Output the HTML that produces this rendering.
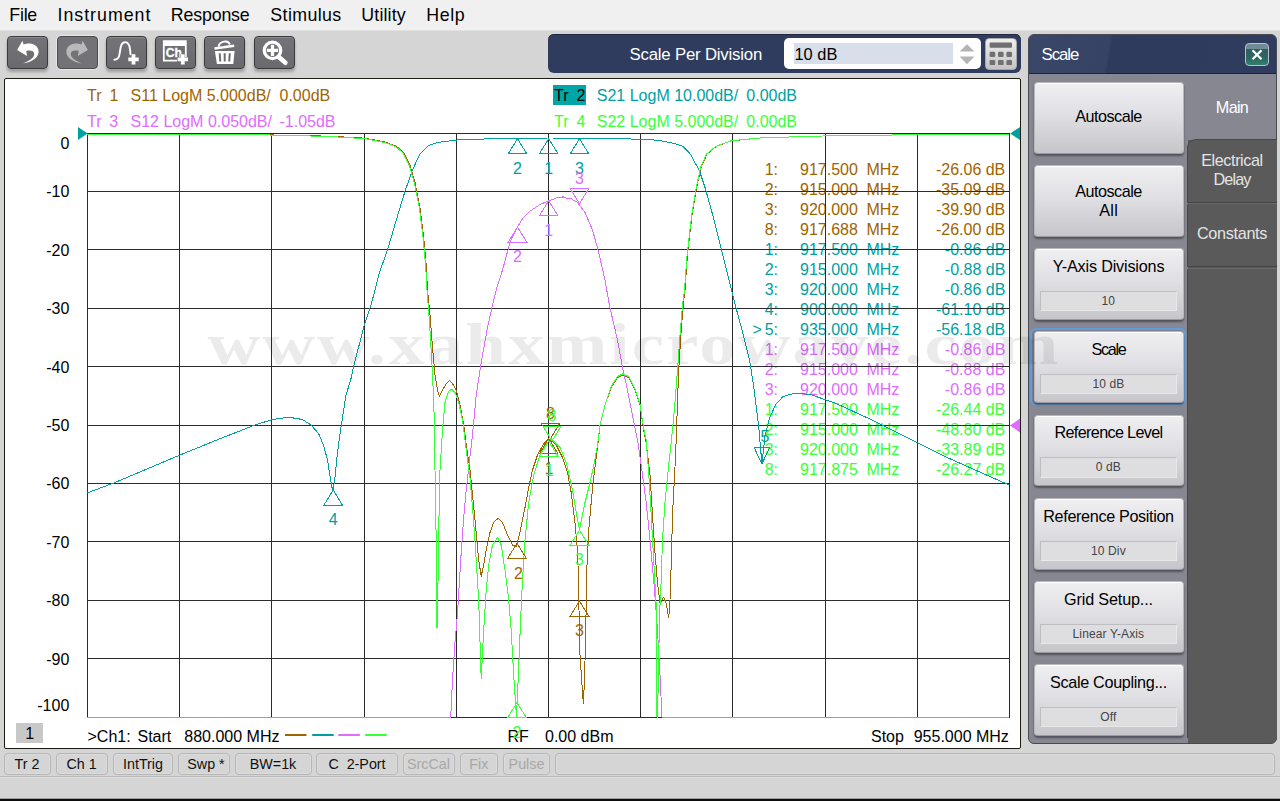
<!DOCTYPE html><html><head><meta charset="utf-8"><title>Network Analyzer</title><style>
*{box-sizing:border-box;margin:0;padding:0}
html,body{width:1280px;height:801px;overflow:hidden;background:#d5d5d5;font-family:"Liberation Sans",sans-serif;}
.abs{position:absolute}
#menubar{position:absolute;left:0;top:0;width:1280px;height:30px;background:#f0f0f0;}
#menubar span{position:absolute;top:4.3px;font-size:17.8px;line-height:22px;color:#000;white-space:nowrap}
#toolbar{position:absolute;left:0;top:30px;width:1280px;height:48px;background:#d5d5d5;border-top:1px solid #e2e2e2}
.tb{position:absolute;top:36px;width:41px;height:33px;border-radius:4px;background:linear-gradient(#747478,#6a6a6e);border:1px solid #3a3a3c;box-shadow:0 3px 3px rgba(0,0,0,.26), inset 0 1px 0 rgba(255,255,255,.16)}
.tb svg{position:absolute;left:-1px;top:-1px}
#spd{position:absolute;left:548px;top:34px;width:473px;height:39px;border-radius:6px;background:#2f3c5e;box-shadow:0 1px 0 #1f2840 inset}
#spd .lbl{position:absolute;left:81.5px;top:10.7px;font-size:16.8px;letter-spacing:-0.2px;line-height:20px;color:#fff;white-space:nowrap}
#spd .inp{position:absolute;left:236px;top:4px;width:197px;height:31px;border-radius:5px;background:#fff}
#spd .hl{position:absolute;left:246px;top:9px;width:159px;height:21px;background:#d8deea}
#spd .val{position:absolute;left:246.5px;top:9.6px;font-size:16.4px;line-height:21px;color:#000}
#spd .calc{position:absolute;left:437px;top:4px;width:32px;height:32px;border-radius:4px;background:linear-gradient(#efefef,#c4c4c4);border:1px solid #a8a8a8}
#chart{position:absolute;left:4px;top:78px;width:1017px;height:671px;background:#fff;border:1px solid #1c1c14;border-radius:2px}
#panel{position:absolute;left:1028px;top:34px;width:249px;height:710px;border-radius:6px;background:#5a5a5a;overflow:hidden;border:1px solid #4a4a52}
#panel .title{position:absolute;left:0;top:0;width:249px;height:39px;background:linear-gradient(100deg,#3a4768 0%,#364364 32%,#2e3b5d 33%,#2f3c5e 100%);border-bottom:1px solid #1c243a}
#panel .title span{position:absolute;left:12.6px;top:9.8px;font-size:16.8px;line-height:20px;color:#fff;letter-spacing:-1.05px}
#panel .col{position:absolute;left:0;top:39px;width:159px;height:671px;background:#878791}
#panel .maintab{position:absolute;left:159px;top:39px;width:90px;height:66px;background:#878791}
.pbtn{position:absolute;left:1033.5px;width:150px;height:71.5px;border-radius:4px;background:linear-gradient(#efeff2 0%,#e0e0e4 45%,#c6c6ca 100%);box-shadow:0 2px 2px rgba(40,40,50,.55), inset 0 1px 0 #fff;border:1px solid #b8b8bc;border-bottom-color:#9a9aa0;color:#000;text-align:center;font-size:16.2px;white-space:nowrap}
.pbtn .t{position:absolute;left:0;width:148px;text-align:center;line-height:19px}
.pbtn .v{position:absolute;left:5.7px;top:41.6px;width:136.4px;height:20.4px;background:#dedee0;border:1px solid #bdbdc2;border-bottom-color:#e8e8ea;border-right-color:#e8e8ea;font-size:12px;line-height:18px;color:#444;text-align:center;letter-spacing:.12px}
.tabtxt{position:absolute;color:#e4e4e4;font-size:16.2px;line-height:19px;text-align:center;white-space:nowrap}
#status{position:absolute;left:0;top:750px;width:1280px;height:27px;background:#d5d5d5}
.cell{position:absolute;top:753px;height:22px;border:1px solid #b6b6b6;border-radius:4px;box-shadow:inset 0 0 0 1px #dcdcdc;font-size:14.3px;line-height:20.6px;text-align:center;color:#111;white-space:nowrap}
.cell.dis{color:#a8a8a8}
#bottom{position:absolute;left:0;top:776px;width:1280px;height:23px;background:#d5d5d5;border-top:1px solid #b9b9b9;border-bottom:1px solid #9c9c9c;box-shadow:inset 0 1px 0 #dedede}
#bline{position:absolute;left:0;top:799.4px;width:1280px;height:1.6px;background:#0c0c0c}
</style></head><body>
<div id="menubar">
<span style="left:9.3px;letter-spacing:-0.23px">File</span>
<span style="left:57.5px;letter-spacing:0.99px">Instrument</span>
<span style="left:170.8px;letter-spacing:-0.16px">Response</span>
<span style="left:270.3px;letter-spacing:0.39px">Stimulus</span>
<span style="left:361.3px;letter-spacing:0.16px">Utility</span>
<span style="left:426.3px;letter-spacing:0.63px">Help</span>
</div>
<div id="toolbar"></div>
<div class="tb" style="left:7px"><svg width="41" height="33" viewBox="0 0 41 33"><path d="M10.1 14.1 L15.5 4.7 L16.6 8.4 C23 6.2 31.4 8.6 31.6 15.4 C31.8 21.6 24.6 26 16.2 27.4 C21.6 25.2 27 22 27.2 18.2 C27.4 14.8 23.4 14 19.2 15 L20.1 19.9 Z" fill="#fff"/></svg></div>
<div class="tb" style="left:57px;box-shadow:0 0 0 1px #e6e6e6;border-color:#4c4c4e;background:#737377"><svg width="41" height="33" viewBox="0 0 41 33"><path transform="translate(41,0) scale(-1,1)" d="M10.1 14.1 L15.5 4.7 L16.6 8.4 C23 6.2 31.4 8.6 31.6 15.4 C31.8 21.6 24.6 26 16.2 27.4 C21.6 25.2 27 22 27.2 18.2 C27.4 14.8 23.4 14 19.2 15 L20.1 19.9 Z" fill="#b9b9bb"/></svg></div>
<div class="tb" style="left:106px"><svg width="41" height="33" viewBox="0 0 41 33"><path d="M8.4 23.7 C12.4 23.7 13.2 21 13.8 16.6 C14.6 10.6 15.2 6.3 19.3 6.3 C23.4 6.3 23.6 10.6 24.1 14 C24.3 15.6 24.4 17 24.5 18.2" fill="none" stroke="#fff" stroke-width="1.9" stroke-linecap="round"/><path d="M22.3 21.5 H25.6 V18.2 H29.4 V21.5 H32.7 V25.299999999999997 H29.4 V28.599999999999998 H25.6 V25.299999999999997 H22.3Z" fill="#fff" /></svg></div>
<div class="tb" style="left:155px"><svg width="41" height="33" viewBox="0 0 41 33"><path d="M7.9 4.2 H31.7 V21 H29.9 V9.9 H9.7 V23.7 H22 V25.5 H7.9Z" fill="#fff"/><text x="10.8" y="20.9" font-family="Liberation Sans, sans-serif" font-weight="bold" font-size="12.8" fill="#fff" stroke="#fff" stroke-width=".35" textLength="16.2" lengthAdjust="spacingAndGlyphs">Ch</text><path d="M22.6 21.5 H25.900000000000002 V18.2 H29.7 V21.5 H33.0 V25.299999999999997 H29.7 V28.599999999999998 H25.900000000000002 V25.299999999999997 H22.6Z" fill="#fff" stroke="#6e6e72" stroke-width=".9" paint-order="stroke"/></svg></div>
<div class="tb" style="left:204px"><svg width="41" height="33" viewBox="0 0 41 33"><path d="M10.9 15 H30.6 L29.3 27.9 H12.9 Z" fill="#fff"/><path d="M15.7 17.3 L16.3 25.5 M20.7 17.3 V25.5 M25.8 17.3 L25.2 25.5" stroke="#6e6e72" stroke-width="2" fill="none"/><path d="M10.5 12.5 L30.2 9.8" stroke="#fff" stroke-width="2.6" fill="none"/><path d="M14.6 10.6 C15.4 5 24.4 3.6 25.8 8.6" stroke="#fff" stroke-width="2" fill="none"/></svg></div>
<div class="tb" style="left:253.5px"><svg width="41" height="33" viewBox="0 0 41 33"><circle cx="18.5" cy="14.4" r="8.2" fill="none" stroke="#fff" stroke-width="3.3"/><path d="M12.9 14.4 H24.1 M18.5 8.8 V20" stroke="#fff" stroke-width="3.3"/><path d="M24.8 21 L31.4 26.8" stroke="#fff" stroke-width="4.6" stroke-linecap="round"/></svg></div>
<div id="spd"><span class="lbl">Scale Per Division</span><div class="inp"></div><div class="hl"></div><span class="val">10 dB</span><svg class="abs" style="left:410px;top:8px" width="18" height="24" viewBox="0 0 18 24"><path d="M9 2.2 L16.4 9.4 H1.6Z M9 22.2 L16.4 14.4 H1.6Z" fill="#b4b4b4"/></svg><div class="calc"><svg width="30" height="30" viewBox="0 0 30 30" style="position:absolute;left:0;top:0"><g fill="#707070"><rect x="3.6" y="3.6" width="22.4" height="5.2" rx="1"/><rect x="3.6" y="12.8" width="5.6" height="5.2" rx="1.2"/><rect x="12.0" y="12.8" width="5.6" height="5.2" rx="1.2"/><rect x="20.4" y="12.8" width="5.6" height="5.2" rx="1.2"/><rect x="3.6" y="20.9" width="5.6" height="5.2" rx="1.2"/><rect x="12.0" y="20.9" width="5.6" height="5.2" rx="1.2"/><rect x="20.4" y="20.9" width="5.6" height="5.2" rx="1.2"/></g></svg></div></div>
<div id="chart"></div>
<svg class="abs" style="left:0;top:0" width="1280" height="801" viewBox="0 0 1280 801" font-family="Liberation Sans, sans-serif" font-size="16">
<text x="87" y="100.7" fill="#9E6400" text-anchor="start" >Tr</text><text x="109.4" y="100.7" fill="#9E6400" text-anchor="start" >1</text><text x="130.5" y="100.7" fill="#9E6400" text-anchor="start" >S11 LogM 5.000dB/</text><text x="279.5" y="100.7" fill="#9E6400" text-anchor="start" >0.00dB</text>
<text x="87" y="126.7" fill="#DE6CFF" text-anchor="start" >Tr</text><text x="109.2" y="126.7" fill="#DE6CFF" text-anchor="start" >3</text><text x="130.5" y="126.7" fill="#DE6CFF" text-anchor="start" >S12 LogM 0.050dB/</text><text x="279.5" y="126.7" fill="#DE6CFF" text-anchor="start" >-1.05dB</text>
<rect x="553" y="85" width="33" height="20" fill="#00A6A6"/>
<text x="554" y="100.7" fill="#000" text-anchor="start" >Tr</text><text x="576.4" y="100.7" fill="#000" text-anchor="start" >2</text><text x="596.8" y="100.7" fill="#00A0A0" text-anchor="start" >S21 LogM 10.00dB/</text><text x="746.3" y="100.7" fill="#00A0A0" text-anchor="start" >0.00dB</text>
<text x="554" y="126.7" fill="#38FF38" text-anchor="start" >Tr</text><text x="576.4" y="126.7" fill="#38FF38" text-anchor="start" >4</text><text x="596.8" y="126.7" fill="#38FF38" text-anchor="start" >S22 LogM 5.000dB/</text><text x="746.3" y="126.7" fill="#38FF38" text-anchor="start" >0.00dB</text>
<text x="69.3" y="149.0" fill="#000" text-anchor="end" >0</text>
<text x="69.3" y="197.4" fill="#000" text-anchor="end" >-10</text>
<text x="69.3" y="255.8" fill="#000" text-anchor="end" >-20</text>
<text x="69.3" y="314.2" fill="#000" text-anchor="end" >-30</text>
<text x="69.3" y="372.6" fill="#000" text-anchor="end" >-40</text>
<text x="69.3" y="431.0" fill="#000" text-anchor="end" >-50</text>
<text x="69.3" y="489.4" fill="#000" text-anchor="end" >-60</text>
<text x="69.3" y="547.8" fill="#000" text-anchor="end" >-70</text>
<text x="69.3" y="606.2" fill="#000" text-anchor="end" >-80</text>
<text x="69.3" y="664.6" fill="#000" text-anchor="end" >-90</text>
<text x="69.3" y="710.8" fill="#000" text-anchor="end" >-100</text>
<text x="778" y="174.8" fill="#9E6400" text-anchor="end" >1:</text><text x="800" y="174.8" fill="#9E6400" text-anchor="start" >917.500</text><text x="866.4" y="174.8" fill="#9E6400" text-anchor="start" >MHz</text><text x="1005.3" y="174.8" fill="#9E6400" text-anchor="end" >-26.06 dB</text>
<text x="778" y="194.8" fill="#9E6400" text-anchor="end" >2:</text><text x="800" y="194.8" fill="#9E6400" text-anchor="start" >915.000</text><text x="866.4" y="194.8" fill="#9E6400" text-anchor="start" >MHz</text><text x="1005.3" y="194.8" fill="#9E6400" text-anchor="end" >-35.09 dB</text>
<text x="778" y="214.8" fill="#9E6400" text-anchor="end" >3:</text><text x="800" y="214.8" fill="#9E6400" text-anchor="start" >920.000</text><text x="866.4" y="214.8" fill="#9E6400" text-anchor="start" >MHz</text><text x="1005.3" y="214.8" fill="#9E6400" text-anchor="end" >-39.90 dB</text>
<text x="778" y="234.8" fill="#9E6400" text-anchor="end" >8:</text><text x="800" y="234.8" fill="#9E6400" text-anchor="start" >917.688</text><text x="866.4" y="234.8" fill="#9E6400" text-anchor="start" >MHz</text><text x="1005.3" y="234.8" fill="#9E6400" text-anchor="end" >-26.00 dB</text>
<text x="778" y="254.8" fill="#00A0A0" text-anchor="end" >1:</text><text x="800" y="254.8" fill="#00A0A0" text-anchor="start" >917.500</text><text x="866.4" y="254.8" fill="#00A0A0" text-anchor="start" >MHz</text><text x="1005.3" y="254.8" fill="#00A0A0" text-anchor="end" >-0.86 dB</text>
<text x="778" y="274.8" fill="#00A0A0" text-anchor="end" >2:</text><text x="800" y="274.8" fill="#00A0A0" text-anchor="start" >915.000</text><text x="866.4" y="274.8" fill="#00A0A0" text-anchor="start" >MHz</text><text x="1005.3" y="274.8" fill="#00A0A0" text-anchor="end" >-0.88 dB</text>
<text x="778" y="294.8" fill="#00A0A0" text-anchor="end" >3:</text><text x="800" y="294.8" fill="#00A0A0" text-anchor="start" >920.000</text><text x="866.4" y="294.8" fill="#00A0A0" text-anchor="start" >MHz</text><text x="1005.3" y="294.8" fill="#00A0A0" text-anchor="end" >-0.86 dB</text>
<text x="778" y="314.8" fill="#00A0A0" text-anchor="end" >4:</text><text x="800" y="314.8" fill="#00A0A0" text-anchor="start" >900.000</text><text x="866.4" y="314.8" fill="#00A0A0" text-anchor="start" >MHz</text><text x="1005.3" y="314.8" fill="#00A0A0" text-anchor="end" >-61.10 dB</text>
<text x="752.5" y="334.8" fill="#00A0A0" text-anchor="start" >&gt;</text>
<text x="778" y="334.8" fill="#00A0A0" text-anchor="end" >5:</text><text x="800" y="334.8" fill="#00A0A0" text-anchor="start" >935.000</text><text x="866.4" y="334.8" fill="#00A0A0" text-anchor="start" >MHz</text><text x="1005.3" y="334.8" fill="#00A0A0" text-anchor="end" >-56.18 dB</text>
<text x="778" y="354.8" fill="#DE6CFF" text-anchor="end" >1:</text><text x="800" y="354.8" fill="#DE6CFF" text-anchor="start" >917.500</text><text x="866.4" y="354.8" fill="#DE6CFF" text-anchor="start" >MHz</text><text x="1005.3" y="354.8" fill="#DE6CFF" text-anchor="end" >-0.86 dB</text>
<text x="778" y="374.8" fill="#DE6CFF" text-anchor="end" >2:</text><text x="800" y="374.8" fill="#DE6CFF" text-anchor="start" >915.000</text><text x="866.4" y="374.8" fill="#DE6CFF" text-anchor="start" >MHz</text><text x="1005.3" y="374.8" fill="#DE6CFF" text-anchor="end" >-0.88 dB</text>
<text x="778" y="394.8" fill="#DE6CFF" text-anchor="end" >3:</text><text x="800" y="394.8" fill="#DE6CFF" text-anchor="start" >920.000</text><text x="866.4" y="394.8" fill="#DE6CFF" text-anchor="start" >MHz</text><text x="1005.3" y="394.8" fill="#DE6CFF" text-anchor="end" >-0.86 dB</text>
<text x="778" y="414.8" fill="#38FF38" text-anchor="end" >1:</text><text x="800" y="414.8" fill="#38FF38" text-anchor="start" >917.500</text><text x="866.4" y="414.8" fill="#38FF38" text-anchor="start" >MHz</text><text x="1005.3" y="414.8" fill="#38FF38" text-anchor="end" >-26.44 dB</text>
<text x="778" y="434.8" fill="#38FF38" text-anchor="end" >2:</text><text x="800" y="434.8" fill="#38FF38" text-anchor="start" >915.000</text><text x="866.4" y="434.8" fill="#38FF38" text-anchor="start" >MHz</text><text x="1005.3" y="434.8" fill="#38FF38" text-anchor="end" >-48.80 dB</text>
<text x="778" y="454.8" fill="#38FF38" text-anchor="end" >3:</text><text x="800" y="454.8" fill="#38FF38" text-anchor="start" >920.000</text><text x="866.4" y="454.8" fill="#38FF38" text-anchor="start" >MHz</text><text x="1005.3" y="454.8" fill="#38FF38" text-anchor="end" >-33.89 dB</text>
<text x="778" y="474.8" fill="#38FF38" text-anchor="end" >8:</text><text x="800" y="474.8" fill="#38FF38" text-anchor="start" >917.875</text><text x="866.4" y="474.8" fill="#38FF38" text-anchor="start" >MHz</text><text x="1005.3" y="474.8" fill="#38FF38" text-anchor="end" >-26.27 dB</text>
<path d="M87.5 133 V718 M179.5 133 V718 M271.5 133 V718 M364.5 133 V718 M456.5 133 V718 M548.5 133 V718 M640.5 133 V718 M732.5 133 V718 M825.5 133 V718 M917.5 133 V718 M1009.5 133 V718 M87 133.5 H1010 M87 191.5 H1010 M87 249.5 H1010 M87 308.5 H1010 M87 366.5 H1010 M87 425.5 H1010 M87 483.5 H1010 M87 541.5 H1010 M87 600.5 H1010 M87 658.5 H1010 M87 717.5 H1010" stroke="#2b2b2b" stroke-width="1" fill="none" shape-rendering="crispEdges"/>
<rect x="16" y="723" width="27" height="20" fill="#c8c8c8"/><text x="29.8" y="738.7" fill="#000" text-anchor="middle" >1</text>
<text x="87.5" y="741.7" fill="#000" text-anchor="start" >&gt;Ch1:</text><text x="137.5" y="741.7" fill="#000" text-anchor="start" >Start</text><text x="184.3" y="741.7" fill="#000" text-anchor="start" >880.000 MHz</text>
<rect x="285" y="734" width="21.5" height="2" fill="#9E6400"/>
<rect x="312.2" y="734" width="21.5" height="2" fill="#00A0A0"/>
<rect x="338.3" y="734" width="21.5" height="2" fill="#DE6CFF"/>
<rect x="365.2" y="734" width="21.5" height="2" fill="#38FF38"/>
<text x="507.5" y="741.7" fill="#000" text-anchor="start" >RF</text><text x="545" y="741.7" fill="#000" text-anchor="start" >0.00 dBm</text>
<text x="871" y="741.7" fill="#000" text-anchor="start" >Stop</text><text x="913.7" y="741.7" fill="#000" text-anchor="start" >955.000 MHz</text>
<polyline points="87.0,134.0 250.0,134.5 330.0,136.2 365.0,138.2 385.0,142.0 396.2,146.2 403.7,152.5 410.0,165.0 415.0,182.5 420.0,207.5 423.7,237.5 426.2,265.0 427.5,290.0 430.0,315.0 432.5,347.5 435.0,375.0 437.5,390.0 439.5,396.2 442.5,390.0 446.2,383.7 449.2,380.5 452.5,383.7 456.2,390.0 460.0,405.0 463.7,425.0 467.0,450.0 470.0,470.0 475.0,520.0 478.7,560.0 481.2,576.2 483.7,565.0 486.2,550.0 490.0,532.5 493.7,522.5 498.2,518.2 502.5,522.5 507.5,535.0 512.5,545.0 516.2,546.2 520.0,532.5 525.0,507.5 528.7,487.5 532.5,470.0 537.5,455.0 543.7,443.7 548.7,438.5 556.2,445.0 562.5,457.5 567.5,472.5 571.2,492.5 575.0,522.5 577.5,550.0 578.5,580.0 578.9,605.0 580.0,655.0 582.0,685.0 583.3,703.7 584.5,680.0 585.5,642.5 586.2,605.0 586.5,580.0 587.0,565.0 588.7,530.0 591.2,502.5 593.7,477.5 597.5,447.5 600.0,425.0 605.0,405.0 611.2,387.5 617.5,377.5 622.5,375.0 628.7,377.5 635.0,390.0 640.0,405.0 643.7,430.0 646.0,442.0 648.0,458.0 650.0,475.0 652.5,515.0 655.0,552.5 657.5,583.0 660.0,603.0 663.7,597.0 666.2,603.7 668.7,618.0 670.0,600.0 671.2,565.0 672.5,515.0 675.0,467.0 676.2,440.0 677.5,402.5 678.7,370.0 681.2,330.0 683.7,300.0 685.0,290.0 687.4,256.0 691.8,216.4 696.4,189.0 700.9,167.7 707.0,154.0 716.2,146.3 731.4,140.8 761.9,137.8 822.8,136.0 914.2,134.7 1008.7,134.1" fill="none" stroke="#9E6400" stroke-width="1" stroke-linejoin="round" shape-rendering="crispEdges"/>
<polyline points="87.0,493.0 115.0,482.5 180.0,455.0 220.0,438.7 255.0,425.0 272.5,419.5 288.7,417.2 302.5,419.5 311.0,425.0 318.7,433.7 323.7,446.0 327.5,460.0 330.0,476.0 332.0,487.5 333.2,490.0 335.0,477.5 337.5,452.5 340.0,433.7 342.5,417.5 346.0,395.0 350.7,380.0 353.4,367.2 364.6,324.0 371.2,304.5 379.6,272.0 387.5,250.0 396.0,221.0 405.0,191.2 412.5,170.0 420.0,153.7 428.7,145.5 437.5,142.5 457.5,140.0 492.5,138.7 548.7,138.0 607.5,138.2 640.0,139.3 658.3,140.2 673.5,143.3 682.7,146.3 690.3,154.0 699.4,170.7 705.5,189.0 713.1,216.4 720.7,246.9 728.4,277.3 736.0,307.8 742.0,330.0 749.7,360.5 754.3,391.0 758.8,427.5 761.9,464.0 764.9,436.6 769.5,418.4 775.6,404.6 783.2,396.4 795.4,393.0 810.6,394.6 835.0,403.0 868.5,418.4 899.0,433.6 944.7,456.4 975.2,470.0 1008.7,484.8" fill="none" stroke="#00A0A0" stroke-width="1" stroke-linejoin="round" shape-rendering="crispEdges"/>
<polyline points="87.0,717.4 450.7,717.4 452.5,680.0 455.0,642.5 457.5,614.0 459.5,580.0 461.2,552.5 463.5,520.0 466.2,490.0 469.0,465.0 472.5,435.0 476.2,395.0 481.2,362.5 487.5,327.5 492.5,305.0 496.2,290.0 502.5,270.0 510.0,242.5 517.5,227.0 522.5,218.7 530.0,211.2 540.0,204.5 548.7,200.7 555.0,198.6 558.0,197.2 560.0,198.0 563.0,196.8 566.0,198.0 570.0,198.0 577.5,202.5 585.0,212.5 592.5,230.0 598.7,252.5 605.0,280.0 608.5,300.0 610.5,310.0 617.5,340.0 622.5,367.5 627.5,390.0 632.5,415.0 637.5,440.0 641.2,465.0 646.2,502.5 650.0,540.0 653.7,580.0 657.5,630.0 660.0,675.0 662.0,717.4 1009.0,717.4" fill="none" stroke="#DE6CFF" stroke-width="1" stroke-linejoin="round" shape-rendering="crispEdges"/>
<polyline points="87.0,134.0 250.0,134.5 330.0,136.5 365.0,138.7 385.0,142.5 395.5,146.5 403.0,153.0 409.5,166.0 414.5,183.5 419.5,208.5 423.2,238.5 425.7,266.0 427.0,290.0 429.5,322.5 432.0,365.0 433.7,400.0 434.5,430.0 435.0,470.0 436.2,540.0 437.0,627.5 437.5,626.0 438.5,540.0 440.0,470.0 442.5,430.0 445.0,402.5 448.7,391.2 451.7,389.2 455.0,392.5 458.7,402.5 462.5,420.0 465.7,445.0 468.7,469.5 470.0,477.5 473.7,522.5 476.2,560.0 478.7,600.0 480.0,642.0 481.2,678.7 483.7,630.0 486.2,590.0 488.7,565.0 492.5,545.0 497.5,537.5 501.2,545.0 505.0,570.0 508.7,600.0 511.2,630.0 513.7,675.0 516.5,717.0 518.7,667.5 520.7,617.5 522.5,580.0 525.0,540.0 528.7,502.5 533.7,475.0 540.0,455.0 547.5,442.5 551.0,438.5 560.0,447.5 566.2,462.5 572.5,490.0 576.2,512.5 579.5,530.0 585.0,502.5 590.0,482.5 593.7,466.0 597.5,445.0 600.0,425.0 605.0,405.0 611.2,386.5 617.5,376.5 622.5,374.0 628.7,376.5 635.0,389.0 640.0,404.0 643.7,429.0 646.2,440.0 648.7,472.5 651.2,515.0 653.7,560.0 656.2,605.0 657.0,717.0 657.6,717.0 658.7,655.0 660.0,605.0 661.2,580.0 662.5,540.0 665.0,502.5 668.7,465.0 671.5,440.0 675.0,402.5 677.5,370.0 680.0,335.0 682.5,305.0 684.5,290.0 687.0,256.0 691.5,216.4 696.0,189.0 700.5,167.7 706.5,154.0 716.0,146.3 731.0,140.8 761.9,137.8 822.8,136.0 914.2,134.7 1008.7,134.1" fill="none" stroke="#38FF38" stroke-width="1" stroke-linejoin="round" shape-rendering="crispEdges"/>
<path d="M78 127 L87.6 133.5 L78 140Z M1020 127 L1010.2 133.5 L1020 140Z" fill="#00A0A0"/>
<path d="M1020 418.5 L1010 425.5 L1020 432.5Z" fill="#DE6CFF"/>
<path d="M548.7 138.7 L539.5 153.7 H557.9000000000001 Z" fill="none" stroke="#00A0A0" stroke-width="1" shape-rendering="crispEdges"/><text x="548.7" y="174.0" fill="#00A0A0" text-anchor="middle" >1</text><path d="M517.5 138.7 L508.3 153.7 H526.7 Z" fill="none" stroke="#00A0A0" stroke-width="1" shape-rendering="crispEdges"/><text x="517.5" y="174.0" fill="#00A0A0" text-anchor="middle" >2</text><path d="M579.5 138.7 L570.3 153.7 H588.7 Z" fill="none" stroke="#00A0A0" stroke-width="1" shape-rendering="crispEdges"/><text x="579.5" y="174.0" fill="#00A0A0" text-anchor="middle" >3</text><path d="M333.2 490 L324.0 505 H342.4 Z" fill="none" stroke="#00A0A0" stroke-width="1" shape-rendering="crispEdges"/><text x="333.2" y="525.3" fill="#00A0A0" text-anchor="middle" >4</text><path d="M761.9 464 L753.9 447 H769.9 Z" fill="none" stroke="#00A0A0" stroke-width="1" shape-rendering="crispEdges"/><text x="765" y="442" fill="#00A0A0" text-anchor="middle" >5</text>
<path d="M548.7 200.7 L539.5 215.7 H557.9000000000001 Z" fill="none" stroke="#DE6CFF" stroke-width="1" shape-rendering="crispEdges"/><text x="548.7" y="236.0" fill="#DE6CFF" text-anchor="middle" >1</text><path d="M517.5 227 L508.3 242 H526.7 Z" fill="none" stroke="#DE6CFF" stroke-width="1" shape-rendering="crispEdges"/><text x="517.5" y="262.3" fill="#DE6CFF" text-anchor="middle" >2</text><path d="M579.5 203.7 L570.3 188.7 H588.7 Z" fill="none" stroke="#DE6CFF" stroke-width="1" shape-rendering="crispEdges"/><text x="579.5" y="183.7" fill="#DE6CFF" text-anchor="middle" >3</text>
<path d="M548.7 438.5 L539.5 453.5 H557.9000000000001 Z" fill="none" stroke="#9E6400" stroke-width="1" shape-rendering="crispEdges"/><text x="549" y="473.8" fill="#9E6400" text-anchor="middle" >1</text><path d="M550.5 438.5 L541.3 423.5 H559.7 Z" fill="none" stroke="#9E6400" stroke-width="1" shape-rendering="crispEdges"/><text x="550.5" y="418.5" fill="#9E6400" text-anchor="middle" >8</text><path d="M517 543.2 L507.8 558.2 H526.2 Z" fill="none" stroke="#9E6400" stroke-width="1" shape-rendering="crispEdges"/><text x="518.5" y="578.5" fill="#9E6400" text-anchor="middle" >2</text><path d="M579.5 601 L570.3 616 H588.7 Z" fill="none" stroke="#9E6400" stroke-width="1" shape-rendering="crispEdges"/><text x="579.5" y="636.3" fill="#9E6400" text-anchor="middle" >3</text>
<path d="M548.7 441 L539.5 456 H557.9000000000001 Z" fill="none" stroke="#38FF38" stroke-width="1" shape-rendering="crispEdges"/><text x="549.5" y="476.3" fill="#38FF38" text-anchor="middle" >1</text><path d="M552 441 L542.8 426 H561.2 Z" fill="none" stroke="#38FF38" stroke-width="1" shape-rendering="crispEdges"/><text x="552" y="421" fill="#38FF38" text-anchor="middle" >8</text><path d="M517 702.5 L507.8 717.5 H526.2 Z" fill="none" stroke="#38FF38" stroke-width="1" shape-rendering="crispEdges"/><text x="517" y="737.8" fill="#38FF38" text-anchor="middle" >2</text><path d="M579.5 530 L570.3 545 H588.7 Z" fill="none" stroke="#38FF38" stroke-width="1" shape-rendering="crispEdges"/><text x="579.5" y="565.3" fill="#38FF38" text-anchor="middle" >3</text>
</svg>
<div id="panel"><div class="title"><span>Scale</span></div><div class="col"></div><div class="maintab"></div></div>
<div class="pbtn" style="top:82px"><div class="t" style="top:24.2px;letter-spacing:-0.52px;padding-left:-0.52px">Autoscale</div></div>
<div class="pbtn" style="top:165px"><div class="t" style="top:16.3px;letter-spacing:-0.52px;padding-left:-0.52px">Autoscale</div><div class="t" style="top:35.1px;letter-spacing:0.25px;padding-left:0.25px">All</div></div>
<div class="pbtn" style="top:248.3px"><div class="t" style="top:7.8px;letter-spacing:-0.18px;padding-left:-0.18px">Y-Axis Divisions</div><div class="v">10</div></div>
<div class="abs" style="left:1030.3px;top:327.7px;width:156.2px;height:78.8px;border-radius:6px;border:2px solid #5f9ddc;background:#7e7e8a"></div>
<div class="pbtn" style="top:331.1px"><div class="t" style="top:7.8px;letter-spacing:-1.28px;padding-left:-1.28px">Scale</div><div class="v">10 dB</div></div>
<div class="pbtn" style="top:414.7px"><div class="t" style="top:7.8px;letter-spacing:-0.66px;padding-left:-0.66px">Reference Level</div><div class="v">0 dB</div></div>
<div class="pbtn" style="top:498px"><div class="t" style="top:7.8px;letter-spacing:-0.35px;padding-left:-0.35px">Reference Position</div><div class="v">10 Div</div></div>
<div class="pbtn" style="top:581px"><div class="t" style="top:7.8px;letter-spacing:-0.16px;padding-left:-0.16px">Grid Setup...</div><div class="v">Linear Y-Axis</div></div>
<div class="pbtn" style="top:664.3px"><div class="t" style="top:7.8px;letter-spacing:-0.32px;padding-left:-0.32px">Scale Coupling...</div><div class="v">Off</div></div>
<div class="tabtxt" style="left:1187px;top:98px;width:90px;color:#fff;letter-spacing:-0.70px">Main</div>
<div class="abs" style="left:1187px;top:138.5px;width:90px;height:64px;background:#5a5a5a;border-top-left-radius:9px;border-top:1px solid #474747;border-left:1px solid #474747;border-bottom:1px solid #444"></div>
<div class="abs" style="left:1187px;top:203px;width:90px;height:64px;background:#5a5a5a;border-top:1px solid #6a6a6a;border-left:1px solid #474747;border-bottom:1px solid #444;border-top-left-radius:3px"></div>
<div class="abs" style="left:1187px;top:267.5px;width:90px;height:470px;background:#5a5a5a;border-top:1px solid #6a6a6a;border-left:1px solid #474747;border-top-left-radius:3px"></div>
<div class="tabtxt" style="left:1187px;top:151px;width:90px;letter-spacing:-0.41px">Electrical</div>
<div class="tabtxt" style="left:1187px;top:170px;width:90px;letter-spacing:-0.85px">Delay</div>
<div class="tabtxt" style="left:1187px;top:224px;width:90px;letter-spacing:-0.31px">Constants</div>
<div class="abs" style="left:1244.5px;top:42.5px;width:24px;height:23px;border-radius:4px;border:1px solid #b8c0c8;background:linear-gradient(#6f8c94 0%,#6f8c94 22%,#2f5f60 24%,#2a6a62 70%,#35806f 100%)"><svg width="22" height="21" viewBox="0 0 22 21" style="position:absolute;left:0;top:0"><path d="M6.5 6.2 L15.5 15.2 M15.5 6.2 L6.5 15.2" stroke="#fff" stroke-width="2.3"/></svg></div>
<svg class="abs" style="left:0;top:300px;pointer-events:none" width="1280" height="90" viewBox="0 300 1280 90"><text transform="translate(207.5,364) scale(1.25,1)" font-family="Liberation Serif, serif" font-weight="bold" font-size="58.5" letter-spacing="1.6" fill="rgba(0,0,0,0.08)">www.xahxmicrowave.com</text></svg>
<div id="status"></div>
<div class="cell" style="left:3.5px;width:47px">Tr 2</div>
<div class="cell" style="left:55.5px;width:52px">Ch 1</div>
<div class="cell" style="left:113px;width:60px">IntTrig</div>
<div class="cell" style="left:178px;width:52px">&nbsp;Swp *</div>
<div class="cell" style="left:234.5px;width:77px">BW=1k</div>
<div class="cell" style="left:316px;width:82px">C&nbsp; 2-Port</div>
<div class="cell dis" style="left:402.5px;width:52px">SrcCal</div>
<div class="cell dis" style="left:459.5px;width:38.5px">Fix</div>
<div class="cell dis" style="left:503px;width:47px">Pulse</div>
<div class="cell" style="left:555px;width:720px"></div>
<div id="bottom"></div><div id="bline"></div>
</body></html>
